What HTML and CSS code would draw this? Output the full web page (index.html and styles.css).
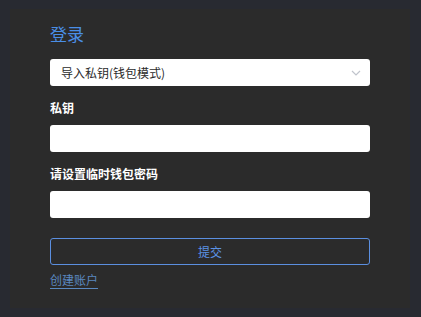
FILE: index.html
```html
<!DOCTYPE html>
<html lang="zh">
<head>
<meta charset="utf-8">
<link rel="stylesheet" href="styles.css">
</head>
<body>
<div class="card">
  <h1 class="title">登录</h1>
  <div class="select">
    <span>导入私钥(钱包模式)</span>
    <svg class="chev" width="10" height="6" viewBox="0 0 10 6"><path d="M1 1 L5 5 L9 1" fill="none" stroke="#c0c4cc" stroke-width="1.2"/></svg>
  </div>
  <label class="label">私钥</label>
  <div class="input"></div>
  <label class="label second">请设置临时钱包密码</label>
  <div class="input"></div>
  <button class="submit">提交</button>
  <a class="link">创建账户</a>
</div>
</body>
</html>
```
FILE: styles.css
```css
html, body { margin: 0; padding: 0; }
body {
  background: #282a31;
  padding: 9px 11px 9px 10px;
  font-family: "Noto Sans CJK SC", "Noto Sans", sans-serif;
  height: 317px;
  box-sizing: border-box;
}
.card {
  background: #2b2b2b;
  height: 299px;
  box-sizing: border-box;
  padding: 13px 40px 0 40px;
  display: flex;
  flex-direction: column;
  align-items: flex-start;
}
.title {
  margin: 0;
  font-size: 17px;
  font-weight: normal;
  line-height: 24px;
  color: #4a8ee6;
}
.select {
  margin-top: 13px;
  align-self: stretch;
  height: 27px;
  background: #fff;
  border-radius: 3px;
  display: flex;
  align-items: center;
  justify-content: space-between;
  padding: 0 9px 0 11px;
  font-size: 12px;
  color: #2b2b2b;
}
.chev { margin-top: 1px; }
.label {
  margin-top: 13px;
  font-size: 12px;
  font-weight: bold;
  line-height: 18px;
  color: #fff;
}
.label.second { margin-top: 13px; }
.input {
  margin-top: 8px;
  align-self: stretch;
  height: 27px;
  background: #fff;
  border-radius: 3px;
}
.submit {
  margin-top: 20px;
  align-self: stretch;
  height: 27px;
  background: transparent;
  border: 1px solid #5b8fe0;
  border-radius: 3px;
  color: #5b93e6;
  font-family: inherit;
  font-size: 12px;
  padding: 0;
}
.link {
  margin-top: 6px;
  font-size: 12px;
  line-height: 18px;
  color: #5a88c0;
  text-decoration: underline;
  text-underline-offset: 3px;
}
```
